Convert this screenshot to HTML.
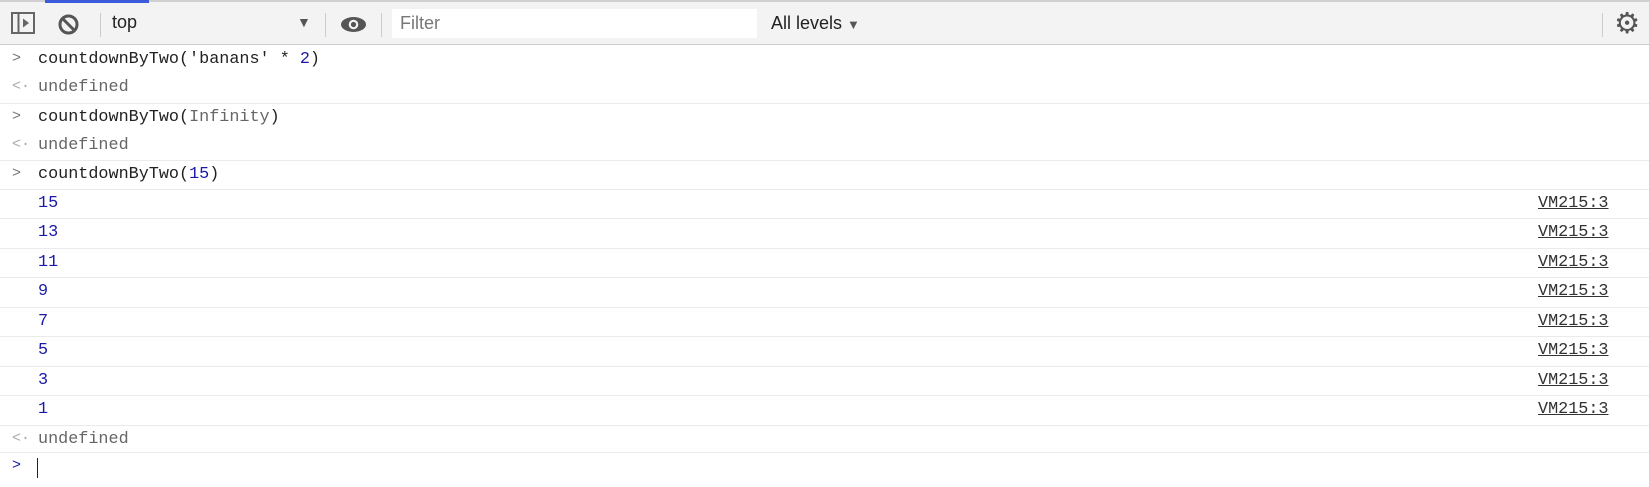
<!DOCTYPE html>
<html><head><style>
body{margin:0;width:1649px;height:487px;background:#fff;font-family:"Liberation Mono",monospace;font-size:16.8px;overflow:hidden;position:relative}
.tb{position:absolute;left:0;top:0;width:1649px;height:45px;background:#f3f3f3;border-top:2px solid #d0d0d0;border-bottom:1px solid #ccc;box-sizing:border-box}
.blue{position:absolute;left:45px;top:0;width:104px;height:3px;background:#3b5bdb}
.sep{position:absolute;top:11px;width:1px;height:24px;background:#ccc}
.row{position:absolute;left:0;width:1649px;border-bottom:1px solid #ebebeb;box-sizing:border-box}
.t{position:absolute;left:38px;top:4px;color:#222}
.b{color:#1a1aa6}.g{color:#666}
.ic{position:absolute;left:12px;top:4px;color:#777;font-size:15px}
.link{position:absolute;left:1538px;top:4px;color:#333;text-decoration:underline}
</style></head><body>
<div class="tb">
<svg style="position:absolute;left:11px;top:10px" width="25" height="23"><rect x="1" y="1" width="22" height="20" fill="none" stroke="#666" stroke-width="2"/><line x1="7.5" y1="1" x2="7.5" y2="21" stroke="#666" stroke-width="2"/><path d="M12 6.5 L18 11 L12 15.5Z" fill="#666"/></svg>
<svg style="position:absolute;left:57px;top:11px" width="23" height="23"><circle cx="11.5" cy="11.5" r="8.5" fill="none" stroke="#555" stroke-width="3"/><line x1="5.5" y1="5.5" x2="17.5" y2="17.5" stroke="#555" stroke-width="3"/></svg>
<div class="sep" style="left:100px"></div>
<div style="position:absolute;left:112px;top:10px;font-family:'Liberation Sans',sans-serif;font-size:18px;color:#222">top</div>
<div style="position:absolute;left:297px;top:12px;font-size:14px;color:#555;font-family:'Liberation Sans',sans-serif">▼</div>
<div class="sep" style="left:325px"></div>
<svg style="position:absolute;left:340px;top:14px" width="27" height="17"><ellipse cx="13.5" cy="8.5" rx="12.5" ry="7.5" fill="#555"/><circle cx="13.5" cy="8.5" r="4.8" fill="#f3f3f3"/><circle cx="13.5" cy="8.5" r="2.6" fill="#555"/></svg>
<div class="sep" style="left:381px"></div>
<div style="position:absolute;left:392px;top:7px;width:365px;height:29px;background:#fff"></div>
<div style="position:absolute;left:400px;top:11px;font-family:'Liberation Sans',sans-serif;font-size:18px;color:#777">Filter</div>
<div style="position:absolute;left:771px;top:11px;font-family:'Liberation Sans',sans-serif;font-size:18px;color:#222">All levels <span style="font-size:13px;color:#555">▼</span></div>
<div class="sep" style="left:1602px"></div>
<div style="position:absolute;left:1614px;top:5px;font-size:29px;line-height:32px;color:#555;font-family:'DejaVu Sans',sans-serif;font-weight:bold">⚙</div>
</div>
<div class="blue"></div>
<div class="row" style="top:46px;height:58px"><span class="ic">&gt;</span><span class="t">countdownByTwo('banans' * <span class="b">2</span>)</span><span class="ic" style="top:32px;color:#aaa">&lt;·</span><span class="t g" style="top:32px">undefined</span></div>
<div class="row" style="top:104px;height:57px"><span class="ic">&gt;</span><span class="t">countdownByTwo(<span class="g">Infinity</span>)</span><span class="ic" style="top:32px;color:#aaa">&lt;·</span><span class="t g" style="top:32px">undefined</span></div>
<div class="row" style="top:161px;height:29px"><span class="ic">&gt;</span><span class="t">countdownByTwo(<span class="b">15</span>)</span></div>
<div class="row" style="top:190px;height:29px"><span class="t b">15</span><span class="link">VM215:3</span></div>
<div class="row" style="top:219px;height:30px"><span class="t b">13</span><span class="link">VM215:3</span></div>
<div class="row" style="top:249px;height:29px"><span class="t b">11</span><span class="link">VM215:3</span></div>
<div class="row" style="top:278px;height:30px"><span class="t b">9</span><span class="link">VM215:3</span></div>
<div class="row" style="top:308px;height:29px"><span class="t b">7</span><span class="link">VM215:3</span></div>
<div class="row" style="top:337px;height:30px"><span class="t b">5</span><span class="link">VM215:3</span></div>
<div class="row" style="top:367px;height:29px"><span class="t b">3</span><span class="link">VM215:3</span></div>
<div class="row" style="top:396px;height:30px"><span class="t b">1</span><span class="link">VM215:3</span></div>
<div class="row" style="top:426px;height:27px"><span class="ic" style="color:#aaa">&lt;·</span><span class="t g">undefined</span></div>
<div class="row" style="top:453px;height:30px;border:none"><span class="ic" style="color:#1a1aa6">&gt;</span><span style="position:absolute;left:37px;top:5px;width:1px;height:20px;background:#222"></span></div>
</body></html>
